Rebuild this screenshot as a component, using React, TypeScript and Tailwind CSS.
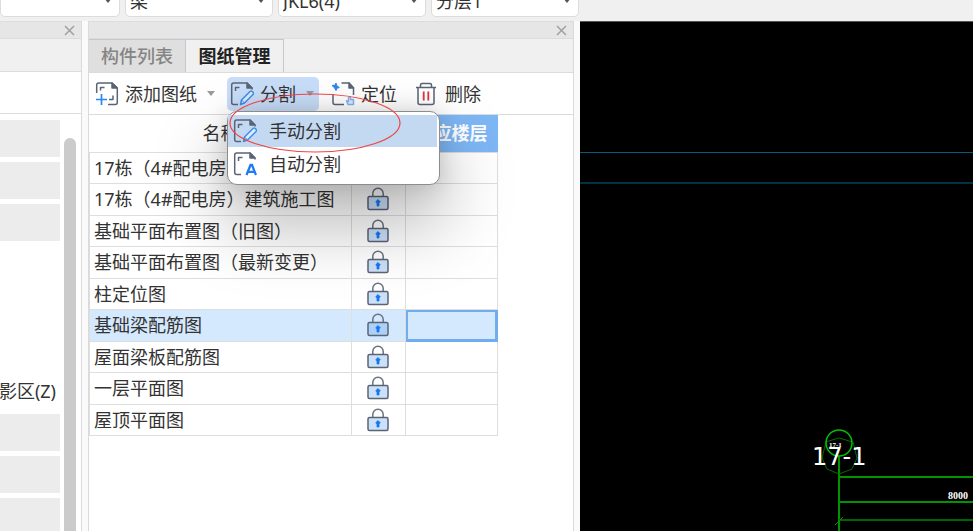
import React from "react";

const FONT = "font-['Noto_Sans','Noto_Sans_CJK_SC',sans-serif]";

const filters = [
  { label: "构件类型", value: "", width: "w-[120px]" },
  { label: "构件", value: "梁", width: "w-[148px]" },
  { label: "名称", value: "JKL6(4)", width: "w-[148px]" },
  { label: "分层", value: "分层1", width: "w-[148px]" },
];

const drawings = [
  "17栋（4#配电房）",
  "17栋（4#配电房）建筑施工图",
  "基础平面布置图（旧图）",
  "基础平面布置图（最新变更）",
  "柱定位图",
  "基础梁配筋图",
  "屋面梁板配筋图",
  "一层平面图",
  "屋顶平面图",
];
const selected = 5;

const navRows = ["bar", "bar", "bar", "", "", "", "影区(Z)", "bar", "bar", "bar"];

function Caret({ className }: { className: string }) {
  return (
    <svg className={className} width="8" height="5" viewBox="0 0 8 5" aria-hidden="true">
      <path d="M0 0h8L4 5z" fill="currentColor" />
    </svg>
  );
}

function CloseButton() {
  return (
    <button type="button" aria-label="关闭" className="mr-[6px] text-[#a0a0a0]">
      <svg width="11" height="11" viewBox="0 0 11 11" fill="none" stroke="currentColor" strokeWidth="1.5">
        <path d="M1 1l9 9M10 1l-9 9" />
      </svg>
    </button>
  );
}

function Icon({ children }: { children: React.ReactNode }) {
  return (
    <svg
      className="shrink-0"
      width="24"
      height="24"
      viewBox="0 0 24 24"
      fill="none"
      stroke="#5b6475"
      strokeWidth="1.5"
      strokeLinejoin="round"
      aria-hidden="true"
    >
      {children}
    </svg>
  );
}

function AddIcon() {
  return (
    <Icon>
      <path d="M1.7 11V3q0-2 2-2H17l5.3 5v14.500q0 2-2 2H13" />
      <path d="M17 1v5h5.300z" fill="#5b6475" />
      <path d="M5.500 8.500V5.500h4M14 17.500h4v-4" />
      <path d="M1 17.500h11M6.500 12v11" stroke="#2b86f0" strokeWidth="1.700" />
    </Icon>
  );
}

function PageOutline() {
  return (
    <>
      <path d="M8 22.500H3.700q-2 0-2-2V3q0-2 2-2H17l5 5v1.500" />
      <path d="M17 1v5h5z" fill="#5b6475" />
      <path d="M5.500 9V5.500H9.500" />
    </>
  );
}

function SplitIcon() {
  return (
    <Icon>
      <PageOutline />
      <path
        d="M10.500 22.500l1-4.500 8.500-8.500q1-1 2.200 0l.8.800q1 1.200 0 2.200L14.500 21z"
        stroke="#3f8ee8"
        fill="#dcecff"
      />
      <path d="M11.500 18l3 3" stroke="#3f8ee8" strokeWidth="1" />
    </Icon>
  );
}

function AutoSplitIcon() {
  return (
    <Icon>
      <PageOutline />
      <path d="M13.500 23l4-10h1.500l4 10M15 19.800h6.500" stroke="#1f7cf0" strokeWidth="2.300" strokeLinejoin="miter" />
    </Icon>
  );
}

function LocateIcon() {
  return (
    <Icon>
      <path d="M2 12v8.500q0 2 2 2h9M10.500 1H18l4.500 5v7" />
      <path d="M18 1v5h4.500z" fill="#5b6475" />
      <path d="M1 3.500l3-.3L5 1l.700 2.500 2.600 2-2.300.7L5 8.500 3.700 6z" stroke="#2b86f0" fill="#2b86f0" strokeWidth="1" />
      <path
        d="M17.500 15.500v4l-2-.8 1.500 3.800h5.500v-5h-3v-2q-1-1-2 0z"
        stroke="#83b5f4"
        fill="#dcecff"
      />
    </Icon>
  );
}

function TrashIcon() {
  return (
    <svg width="22" height="24" viewBox="0 0 22 24" fill="none" stroke="#5b6475" strokeWidth="1.500" aria-hidden="true">
      <path d="M1 5.500h20M5.500 5.500V3q0-1.500 1.500-1.500h8q1.500 0 1.500 1.500v2.500M3 5.500V20.500q0 2 2 2h12q2 0 2-2V5.500" />
      <path d="M8.700 9.500v9M13.300 9.500v9" stroke="#dc3545" strokeWidth="1.800" />
    </svg>
  );
}

function LockIcon() {
  return (
    <svg className="mx-auto" width="22" height="24" viewBox="0 0 22 24" fill="none" stroke="#5b6475" strokeWidth="1.500" aria-label="已锁定">
      <path d="M5.800 9.500V6.500a5.200 5.200 0 0 1 10.400 0v3" stroke="#6b7382" />
      <rect x="1" y="9.500" width="20" height="13" rx="1.500" fill="#3f8ee8" fillOpacity="0.270" />
      <path d="M11 12.500l2.300 2.300-1.300 1V19h-2v-3.200l-1.300-1z" fill="#1677f2" stroke="#1677f2" strokeWidth="0.800" />
    </svg>
  );
}

function NavPanel() {
  return (
    <aside className="flex w-[82px] shrink-0 flex-col border-r border-[#dadada] bg-white">
      <div className="flex h-[18px] shrink-0 items-center justify-end border-y border-[#dcdcdc] bg-[#e6e6e6]">
        <CloseButton />
      </div>
      <div className="h-[33px] shrink-0 border-b border-[#dcdcdc] bg-[#f0f0f0]" />
      <div className="h-[42px] shrink-0 border-b border-[#dcdcdc]" />
      <div className="flex min-h-0 flex-1 justify-between pr-[5px]">
        <div className="flex w-[60px] flex-col gap-[5px] pt-[6px]">
          {navRows.map((row, i) =>
            row === "bar" ? (
              <div key={i} className="h-[37px] shrink-0 bg-[#ececec]" />
            ) : (
              <div key={i} className="flex h-[37px] shrink-0 items-center justify-end pr-1 whitespace-nowrap">
                {row}
              </div>
            ),
          )}
        </div>
        <div className="mt-6 w-3 rounded-t-full bg-[#cbcbcb]" />
      </div>
    </aside>
  );
}

function SplitMenu() {
  return (
    <div
      role="menu"
      className="absolute top-[34px] left-0 z-10 w-[213px] rounded-[10px] border border-[#8c8c8c] bg-white pt-[3px] pr-[2px] pb-[3px] shadow-[0_36px_70px_4px_rgba(0,0,0,0.28),0_2px_24px_rgba(0,0,0,0.16)]"
    >
      <button type="button" role="menuitem" className="flex h-8 w-full items-center gap-3 bg-[#c3d9f1] pl-[5px]">
        <SplitIcon />
        手动分割
      </button>
      <button type="button" role="menuitem" className="flex h-[34px] w-full items-center gap-3 pl-[5px]">
        <AutoSplitIcon />
        自动分割
      </button>
    </div>
  );
}

function Toolbar() {
  return (
    <div className="flex h-[42px] shrink-0 items-center border-b border-[#dcdcdc] pl-[6px]">
      <button type="button" className="flex h-[34px] items-center whitespace-nowrap">
        <AddIcon />
        <span className="ml-[6px]">添加图纸</span>
        <Caret className="ml-[10px] text-[#9a9a9a]" />
      </button>
      <div className="relative ml-3">
        <button type="button" className="flex h-[34px] w-[92px] items-center rounded-[5px] bg-[#c8ddf8] pl-[3px] whitespace-nowrap">
          <SplitIcon />
          <span className="ml-[6px]">分割</span>
          <Caret className="ml-[10px] text-[#929aa5]" />
        </button>
        <SplitMenu />
        <svg className="pointer-events-none absolute top-[15px] left-[2px] z-20" width="172" height="62" aria-hidden="true">
          <ellipse cx="86" cy="31" rx="85" ry="29" fill="none" stroke="#f04444" strokeWidth="1.200" />
        </svg>
      </div>
      <button type="button" className="ml-3 flex h-[34px] items-center gap-[6px] whitespace-nowrap">
        <LocateIcon />
        定位
      </button>
      <button type="button" className="ml-[18px] flex h-[34px] items-center gap-2 whitespace-nowrap">
        <TrashIcon />
        删除
      </button>
    </div>
  );
}

function DrawingTable() {
  return (
    <table className="h-[321px] w-[408px] table-fixed border-collapse">
      <colgroup>
        <col className="w-[262px]" />
        <col className="w-[54px]" />
        <col className="w-[92px]" />
      </colgroup>
      <thead>
        <tr className="h-[37px]">
          <th className="p-0 font-normal">名称</th>
          <th className="p-0 font-normal" aria-label="锁定" />
          <th className="bg-[#7eb7f6] p-0 font-bold text-white">对应楼层</th>
        </tr>
      </thead>
      <tbody>
        {drawings.map((name, i) => (
          <tr key={name} className={i === selected ? "bg-[#d5e9fe]" : ""}>
            <td className="border border-[#dedede] p-0 pl-[4px] leading-6 whitespace-nowrap">{name}</td>
            <td className="border border-[#dedede] p-0 pr-[2px]">
              <LockIcon />
            </td>
            <td
              className={
                i === selected
                  ? "border border-[#6fadee] p-0 shadow-[inset_0_0_0_2px_#6fadee]"
                  : "border border-[#dedede] p-0"
              }
            />
          </tr>
        ))}
      </tbody>
    </table>
  );
}

function DrawingPanel() {
  return (
    <section className="flex w-[486px] shrink-0 flex-col border-x border-[#dadada] bg-white">
      <div className="flex h-[18px] shrink-0 items-center justify-end border-y border-[#dcdcdc] bg-[#e6e6e6]">
        <CloseButton />
      </div>
      <div className="flex h-[34px] shrink-0 border-b border-[#dcdcdc] bg-[#f0f0f0]">
        <button type="button" className="w-[97px] border-t border-r border-[#c4c9d0] bg-[#dfdfdf] font-medium text-[#858585]">
          构件列表
        </button>
        <button type="button" className="w-[98px] border-t border-r border-[#c4c9d0] font-bold text-[#222]">
          图纸管理
        </button>
      </div>
      <Toolbar />
      <DrawingTable />
    </section>
  );
}

function CadCanvas() {
  return (
    <main className="min-w-0 flex-1 border-t border-[#555] bg-black">
      <svg className="block h-full w-full" fill="none" aria-label="图纸视图">
        <line x1="0" y1="130.500" x2="100%" y2="130.500" stroke="#075a7c" />
        <line x1="0" y1="161" x2="100%" y2="161" stroke="#033244" strokeWidth="2" />
        <g stroke="#009400" strokeWidth="2">
          <line x1="259" y1="434" x2="259" y2="100%" />
          <line x1="259" y1="455" x2="100%" y2="455" />
          <line x1="259" y1="480" x2="100%" y2="480" />
          <line x1="259" y1="498" x2="100%" y2="498" stroke="#006200" />
          <path d="M255 503l8-8" strokeWidth="1" />
        </g>
        <path d="M246 420l-4 16 5 11 12 5 13-5 5-11-4-16M246 420l6-2 7-2 7 2 6 2" stroke="#006e00" />
        <circle cx="259" cy="421" r="13" stroke="#00c000" strokeWidth="1.500" />
        <g fill="#fff">
          <text x="232" y="443" fontSize="24" className="font-['DejaVu_Sans',sans-serif]">
            17-1
          </text>
          <text x="249" y="425" fontSize="7" className="font-['Liberation_Serif',serif] font-bold">
            17-1
          </text>
          <text x="368" y="477" fontSize="10" className="font-['Liberation_Serif',serif] font-bold">
            8000
          </text>
        </g>
      </svg>
    </main>
  );
}

export default function App() {
  return (
    <div className={`flex h-screen flex-col overflow-hidden bg-[#f0f0f0] text-[18px] leading-6 text-[#333] ${FONT}`}>
      <header className="flex h-[21px] shrink-0 items-end gap-[5px] overflow-hidden pb-1">
        {filters.map((f) => (
          <label key={f.label} className={`relative block shrink-0 ${f.width}`}>
            <select
              aria-label={f.label}
              className="block h-8 w-full appearance-none rounded-[5px] border border-[#dcdcdc] bg-white pl-1 leading-6"
            >
              <option>{f.value}</option>
            </select>
            <Caret className="pointer-events-none absolute right-2 bottom-[14px] text-[#555]" />
          </label>
        ))}
      </header>
      <div className="flex min-h-0 flex-1 gap-[6px] bg-[#fafafa]">
        <NavPanel />
        <DrawingPanel />
        <CadCanvas />
      </div>
    </div>
  );
}
